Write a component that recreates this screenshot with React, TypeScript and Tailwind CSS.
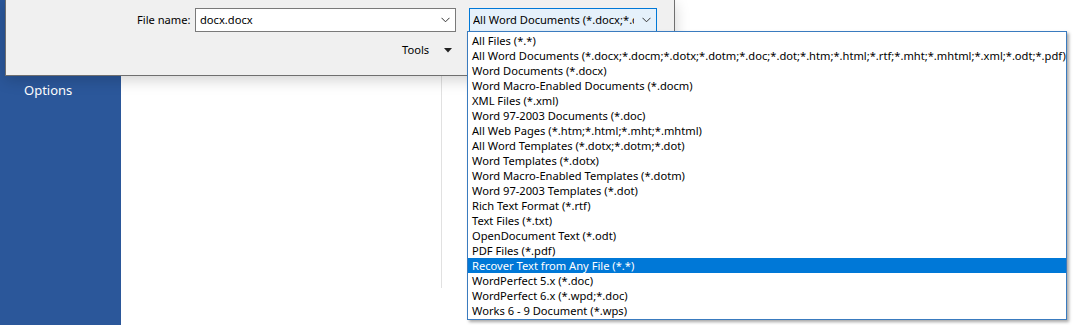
import { useState } from "react";

const FILE_TYPES = [
  "All Files (*.*)",
  "All Word Documents (*.docx;*.docm;*.dotx;*.dotm;*.doc;*.dot;*.htm;*.html;*.rtf;*.mht;*.mhtml;*.xml;*.odt;*.pdf)",
  "Word Documents (*.docx)",
  "Word Macro-Enabled Documents (*.docm)",
  "XML Files (*.xml)",
  "Word 97-2003 Documents (*.doc)",
  "All Web Pages (*.htm;*.html;*.mht;*.mhtml)",
  "All Word Templates (*.dotx;*.dotm;*.dot)",
  "Word Templates (*.dotx)",
  "Word Macro-Enabled Templates (*.dotm)",
  "Word 97-2003 Templates (*.dot)",
  "Rich Text Format (*.rtf)",
  "Text Files (*.txt)",
  "OpenDocument Text (*.odt)",
  "PDF Files (*.pdf)",
  "Recover Text from Any File (*.*)",
  "WordPerfect 5.x (*.doc)",
  "WordPerfect 6.x (*.wpd;*.doc)",
  "Works 6 - 9 Document (*.wps)",
];

const FONT = "font-['Segoe_UI','Noto_Sans',sans-serif]";

function Chevron() {
  return (
    <svg width="9" height="6" viewBox="0 0 9 6" className="shrink-0">
      <path d="M0.5 0.8 L4.5 4.8 L8.5 0.8" fill="none" stroke="#333" strokeWidth="1" />
    </svg>
  );
}

export default function App() {
  const [hovered, setHovered] = useState(15);

  return (
    <div className={`relative flex h-[325px] w-[1073px] overflow-hidden bg-white text-[11.15px] text-black ${FONT}`}>
      {/* backstage sidebar */}
      <aside className="flex w-[121px] shrink-0 flex-col bg-[#2b579a] pt-[81px]">
        <span className="pl-[24px] text-[13px] text-white">Options</span>
      </aside>
      <main className="flex flex-1 pl-[320px] pt-[75px]">
        <div className="h-[213px] w-px bg-[#e1e1e1]" />
      </main>

      {/* save dialog, bottom part */}
      <div className="absolute left-[5px] top-0 h-[76px] w-[670px] border-b border-l border-r border-[#6f6f6f] bg-[#f0f0f0] shadow-[0_4px_14px_rgba(0,0,0,0.18)]">
        <div className="flex items-center pt-[8px]">
          <span className="ml-[131px] w-[58px] whitespace-nowrap">File name:</span>
          <div className="flex h-[24px] w-[261px] items-center justify-between border border-[#7a7a7a] bg-white pl-[4px] pr-[5px]">
            <span>docx.docx</span>
            <Chevron />
          </div>
          <div className="ml-[13px] flex h-[24px] w-[188px] items-center border border-[#0078d7] bg-[#e5f1fb] pl-[3px] pr-[5px]">
            <span className="w-[163px] overflow-hidden whitespace-nowrap">All Word Documents (*.docx;*.docm</span>
            <span className="ml-[8px]">
              <Chevron />
            </span>
          </div>
        </div>
        <div className="ml-[396px] mt-[10px] flex items-center">
          <span>Tools</span>
          <svg width="8" height="5" viewBox="0 0 8 5" className="ml-[15px]">
            <path d="M0 0 H8 L4 4.5 Z" fill="#222" />
          </svg>
        </div>
      </div>

      {/* open file type list */}
      <ul className="absolute left-[467px] top-[31px] w-[600px] border border-[#3a7bbf] bg-white py-px shadow-[2px_2px_3px_rgba(0,0,0,0.35)]">
        {FILE_TYPES.map((t, i) => (
          <li
            key={t}
            onMouseEnter={() => setHovered(i)}
            className={`h-[15px] whitespace-nowrap pl-[4px] leading-[15px] ${
              i === hovered ? "bg-[#0078d7] text-white" : ""
            }`}
          >
            {t}
          </li>
        ))}
      </ul>
    </div>
  );
}
